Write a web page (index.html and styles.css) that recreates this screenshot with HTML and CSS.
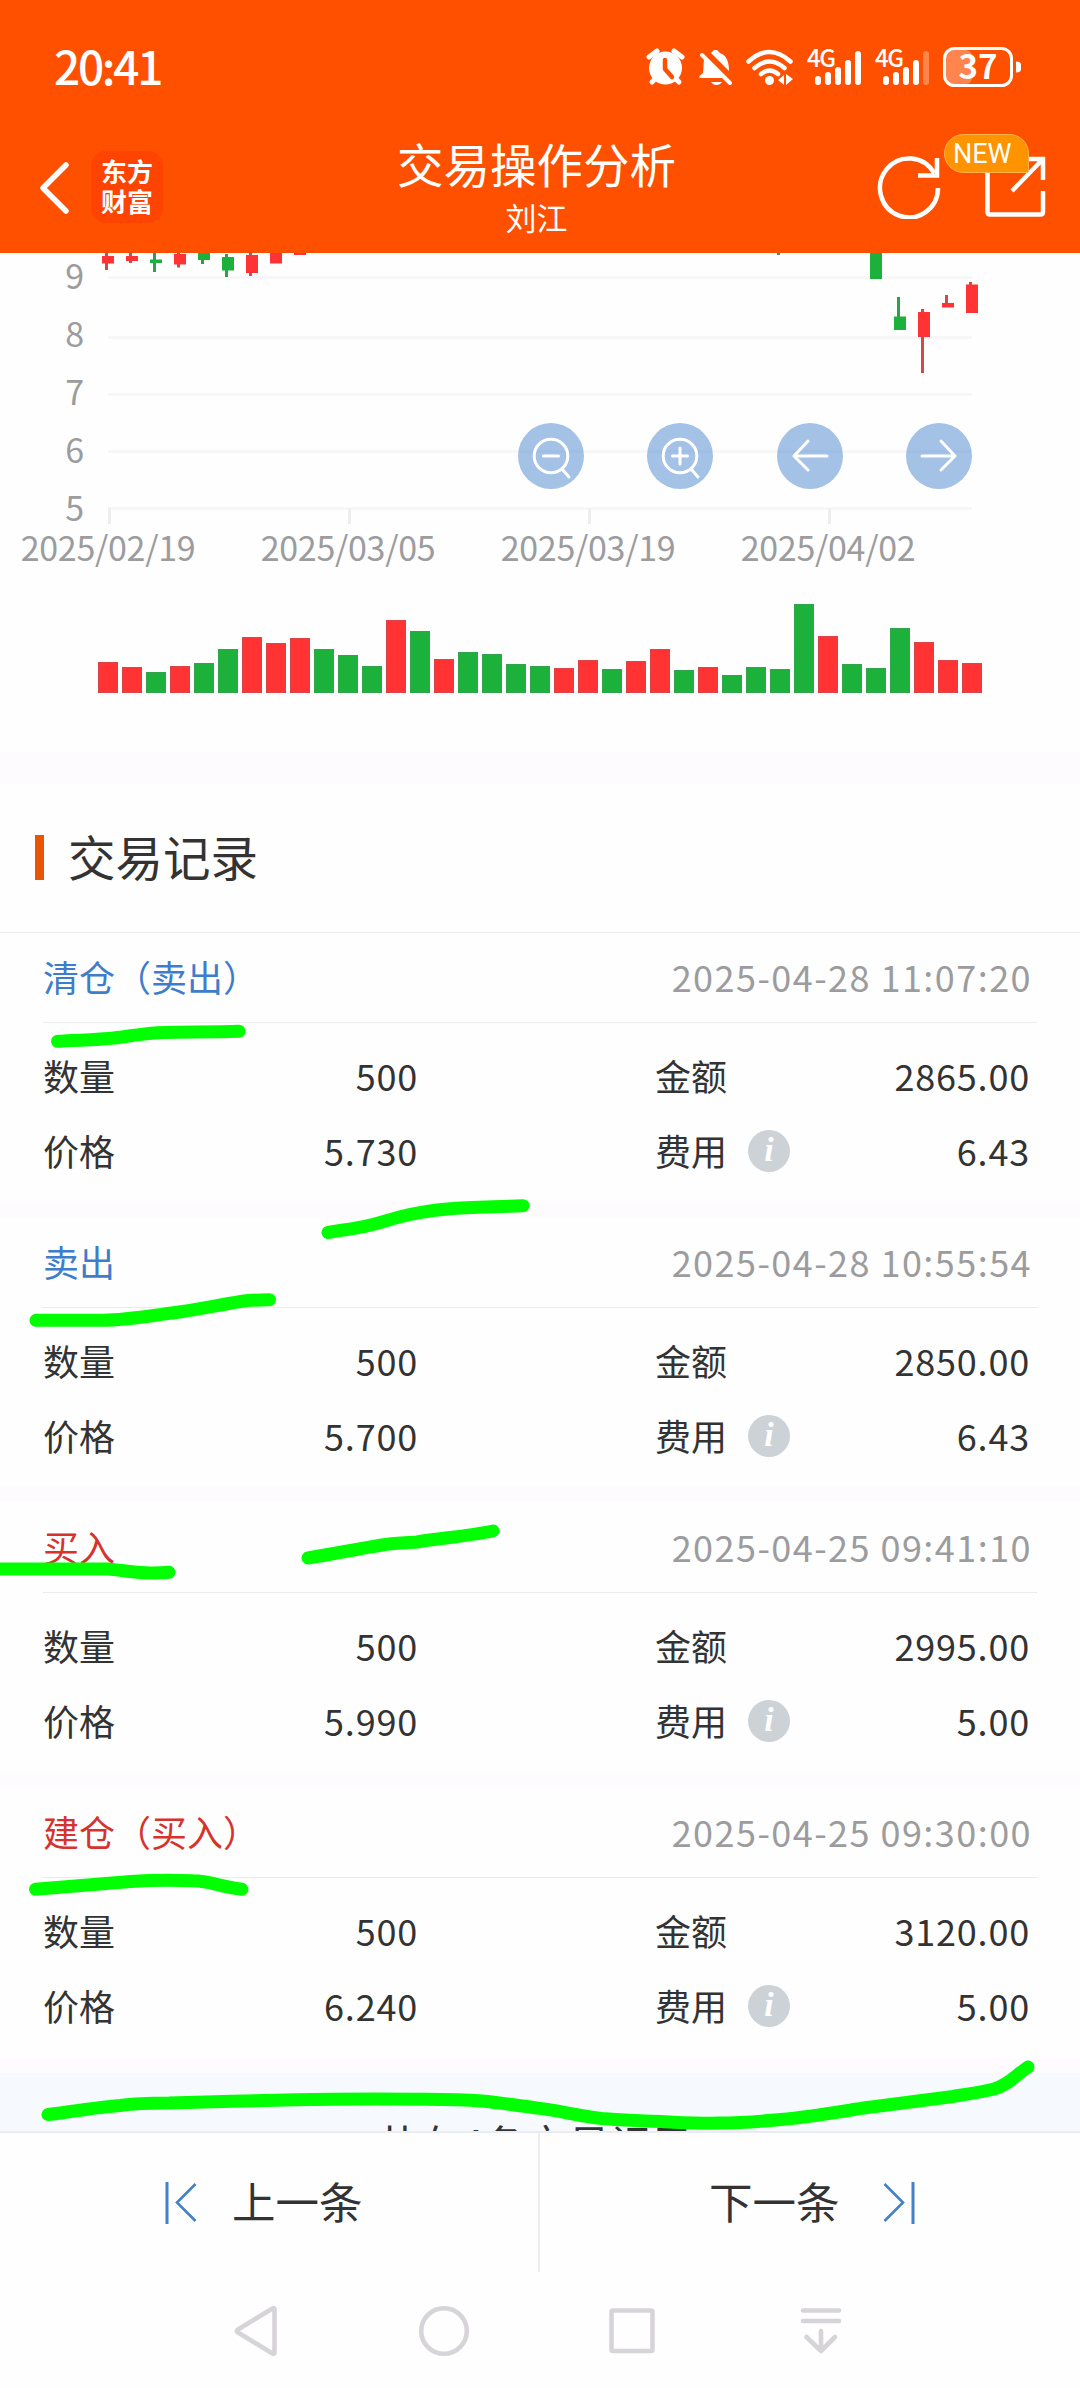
FILE: index.html
```html
<!DOCTYPE html>
<html lang="zh-CN">
<head>
<meta charset="utf-8">
<title>交易操作分析</title>
<link rel="stylesheet" href="styles.css">
</head>
<body>
<div class="screen">
  <header class="top">
    <div class="status">
      <span class="clock">20:41</span>
      <svg class="status-icons" width="384" height="50" viewBox="640 42 384 50">
        <g fill="#fff">
          <circle cx="665.500" cy="68" r="16.500"/>
          <path d="M649 57l8-6M682 57l-8-6M652 82l5-5M679 82l-5-5" stroke="#fff" stroke-width="5" stroke-linecap="round"/>
          <path d="M665 60v9l7 8" fill="none" stroke="#ff5000" stroke-width="4.500" stroke-linecap="round" stroke-linejoin="round"/>
          <path d="M711 53q2-2 3-3h3q1 1 3 3q9 3 9 18zM704 59L723 78H699.500V76L703 73zM711 82h11q-2 3-5.500 3t-5.500-3z"/>
          <path d="M702 55l28 28" stroke="#fff" stroke-width="4" stroke-linecap="round"/>
          <g fill="none" stroke="#fff" stroke-width="4.500" stroke-linecap="round">
            <path d="M748.500 61.500q21-19 42 0M754.500 68q15-13 30 0M761 74q8.500-7 17 0"/>
          </g>
          <circle cx="769.500" cy="80.500" r="4.500"/>
          <path d="M778 80l6-5v10zM786 74l7 5-7 6z"/>
          <text x="807" y="67" class="net">4G</text>
          <text x="875" y="67" class="net">4G</text>
          <g stroke="#fff" stroke-width="6" stroke-linecap="round">
            <path d="M818 79v3M828 75v7M838 70v12M848 63v19M858 54v28"/>
            <path d="M886 79v3M896 75v7M906 70v12M916 63v19"/>
            <path d="M926 54v28" opacity=".3"/>
          </g>
          <rect x="946" y="50" width="26" height="34" rx="6" opacity=".3"/>
          <rect x="944.500" y="48.500" width="67" height="37" rx="10" fill="none" stroke="#fff" stroke-width="3"/>
          <path d="M1016 61.500q5 0 5 3v5q0 3-5 3z"/>
          <text x="978" y="79" text-anchor="middle" class="battery">37</text>
        </g>
      </svg>
    </div>
    <div class="navbar">
      <div class="nav-left">
        <svg width="30" height="54" viewBox="0 0 30 54"><path d="M26 4L3 27L26 50" fill="none" stroke="#fff" stroke-width="5.500" stroke-linecap="round" stroke-linejoin="round"/></svg>
        <div class="logo">东方<br>财富</div>
      </div>
      <div class="titles"><h1>交易操作分析</h1><p>刘江</p></div>
      <div class="nav-right">
        <svg width="64" height="64" viewBox="877 155 64 64" fill="none" stroke="#fff" stroke-width="4.500"><path d="M938 188A29 29.500 0 1 1 934 173M937 158v17.500H918"/></svg>
        <div class="share">
          <svg width="62" height="62" viewBox="985 156 62 62" fill="none" stroke="#fff" stroke-width="4.500"><path d="M987.500 162V212q0 2.500 2.500 2.500h50.500q2.500 0 2.500-2.500V191M1012 191L1042 160M1022 159h21V180"/></svg>
          <span class="badge">NEW</span>
        </div>
      </div>
    </div>
  </header>

  <section class="chart">
    <svg class="kline" width="1080" height="327" viewBox="0 253 1080 327">
      <g fill="#f7f7f8"><path d="M108 276h864v3H108zM108 336h864v3H108zM108 393h864v3H108zM108 450h864v3H108zM108 507h864v3H108z"/></g>
      <path d="M108 508h3v16h-3zM348 508h3v16h-3zM588 508h3v16h-3zM828 508h3v16h-3z" fill="#eee"/>
      <g class="axis">
        <text x="84" y="289" text-anchor="end">9</text>
        <text x="84" y="347" text-anchor="end">8</text>
        <text x="84" y="405" text-anchor="end">7</text>
        <text x="84" y="463" text-anchor="end">6</text>
        <text x="84" y="521" text-anchor="end">5</text>
      </g>
      <g class="axis dates" text-anchor="middle">
        <text x="108" y="561">2025/02/19</text>
        <text x="348" y="561">2025/03/05</text>
        <text x="588" y="561">2025/03/19</text>
        <text x="828" y="561">2025/04/02</text>
      </g>
      <path fill="#d44848" d="M105 253h3v17h-3zM129 253h3v10h-3zM177 253h3v14.500h-3zM249 253h3v23h-3zM921 309h3v64h-3zM945 295h3v9h-3zM969 282h3v4h-3z"/>
      <path fill="#2fa04a" d="M153 253h3v19h-3zM201 253h3v11h-3zM225 254h3v23h-3zM777 253h3v2h-3zM897 297h3v20h-3z"/>
      <path fill="#f33" d="M102 256h12v7.500h-12zM126 256h12v5h-12zM174 254h12v10.500h-12zM246 255h12v18h-12zM270 253h12v10.500h-12zM294 253h12v2h-12zM918 312h12v25h-12zM942 303h12v4.500h-12zM966 284.500h12v28.500h-12z"/>
      <path fill="#1bb13a" d="M150 259.500h12v3.500h-12zM198 253h12v7h-12zM222 257h12v13.500h-12zM870 253h12v26h-12zM894 316.500h12v13.500h-12z"/>
      <g fill="#4a84cd" fill-opacity=".5">
        <circle cx="551" cy="456" r="33"/><circle cx="680" cy="456" r="33"/><circle cx="810" cy="456" r="33"/><circle cx="939" cy="456" r="33"/>
      </g>
      <g fill="none" stroke="#fff" stroke-width="3" stroke-linecap="round" stroke-linejoin="round">
        <circle cx="551" cy="456" r="16.800"/><path d="M543.500 456h15M562 469l7 8"/>
        <circle cx="680" cy="456" r="16.800"/><path d="M672.500 456h15M680 448v16M691 469l7 8"/>
        <path d="M827 456H794M808 441L794 456L808 470"/>
        <path d="M922 456H955M941 441L955 456L941 470"/>
      </g>
    </svg>
    <div class="volume">
      <i class="up" style="height:31px"></i><i class="up" style="height:26px"></i><i class="down" style="height:21px"></i><i class="up" style="height:27px"></i><i class="down" style="height:30px"></i><i class="down" style="height:44px"></i><i class="up" style="height:56px"></i><i class="up" style="height:50px"></i><i class="up" style="height:55px"></i><i class="down" style="height:44px"></i><i class="down" style="height:38px"></i><i class="down" style="height:27px"></i><i class="up" style="height:73px"></i><i class="down" style="height:62px"></i><i class="up" style="height:34px"></i><i class="down" style="height:41px"></i><i class="down" style="height:39px"></i><i class="down" style="height:29px"></i><i class="down" style="height:27px"></i><i class="up" style="height:25px"></i><i class="up" style="height:33px"></i><i class="down" style="height:24px"></i><i class="up" style="height:32px"></i><i class="up" style="height:44px"></i><i class="down" style="height:23px"></i><i class="up" style="height:26px"></i><i class="down" style="height:18px"></i><i class="down" style="height:26px"></i><i class="down" style="height:24px"></i><i class="down" style="height:89px"></i><i class="up" style="height:57px"></i><i class="down" style="height:29px"></i><i class="down" style="height:25px"></i><i class="down" style="height:65px"></i><i class="up" style="height:51px"></i><i class="up" style="height:33px"></i><i class="up" style="height:30px"></i>
    </div>
  </section>

  <section class="records">
    <h2>交易记录</h2>
    <article class="record">
      <div class="head"><span class="sell">清仓（卖出）</span><time>2025-04-28 11:07:20</time></div>
      <dl>
        <div><dt>数量</dt><dd>500</dd></div><div><dt>金额</dt><dd>2865.00</dd></div>
        <div><dt>价格</dt><dd>5.730</dd></div><div><dt>费用<span class="info">i</span></dt><dd>6.43</dd></div>
      </dl>
    </article>
    <article class="record">
      <div class="head"><span class="sell">卖出</span><time>2025-04-28 10:55:54</time></div>
      <dl>
        <div><dt>数量</dt><dd>500</dd></div><div><dt>金额</dt><dd>2850.00</dd></div>
        <div><dt>价格</dt><dd>5.700</dd></div><div><dt>费用<span class="info">i</span></dt><dd>6.43</dd></div>
      </dl>
    </article>
    <article class="record">
      <div class="head"><span class="buy">买入</span><time>2025-04-25 09:41:10</time></div>
      <dl>
        <div><dt>数量</dt><dd>500</dd></div><div><dt>金额</dt><dd>2995.00</dd></div>
        <div><dt>价格</dt><dd>5.990</dd></div><div><dt>费用<span class="info">i</span></dt><dd>5.00</dd></div>
      </dl>
    </article>
    <article class="record">
      <div class="head"><span class="buy">建仓（买入）</span><time>2025-04-25 09:30:00</time></div>
      <dl>
        <div><dt>数量</dt><dd>500</dd></div><div><dt>金额</dt><dd>3120.00</dd></div>
        <div><dt>价格</dt><dd>6.240</dd></div><div><dt>费用<span class="info">i</span></dt><dd>5.00</dd></div>
      </dl>
    </article>
    <div class="summary">共有4条交易记录</div>
  </section>

  <nav class="pager">
    <div class="prev">
      <svg width="32" height="42" viewBox="0 0 32 42" fill="none" stroke="#4481c8"><path d="M2 0v42" stroke-width="3"/><path d="M30.500 2L12 20.500L30.500 39" stroke-width="2.600"/></svg>
      <span>上一条</span>
    </div>
    <div class="next">
      <span>下一条</span>
      <svg width="32" height="42" viewBox="0 0 32 42" fill="none" stroke="#4481c8"><path d="M30 0v42" stroke-width="3"/><path d="M1.500 2L20 20.500L1.500 39" stroke-width="2.600"/></svg>
    </div>
  </nav>

  <div class="system">
    <svg width="1080" height="116" viewBox="0 2272 1080 116" fill="none" stroke="#d6d4d8" stroke-width="4.600" stroke-linejoin="round" stroke-linecap="round">
      <path d="M274.500 2309V2353q0 1.500-2 .500L238 2332.500q-2.500-1.500 0-3L272.500 2308.500q2-1 2 .500z"/>
      <circle cx="444" cy="2331" r="22.800"/>
      <rect x="611.500" y="2310.500" width="41" height="40.500" rx="1.500"/>
      <path d="M803 2310.500h36M803 2321h36M821 2331v20M806.500 2337L821 2351L835 2337"/>
    </svg>
  </div>

  <svg class="marks" width="1080" height="2388" viewBox="0 0 1080 2388" fill="none" stroke="#0f0" stroke-width="13" stroke-linecap="round" stroke-linejoin="round">
    <path d="M57.500 1041.300C76 1040 96 1040 114 1038C131 1036 145 1033 165 1032.500C190 1032 215 1032 239 1031.300"/>
    <path d="M328 1232.500C341 1230 355 1229 368.500 1225.500C379 1223 388 1220 399.500 1217C415 1213 430 1210.500 447.500 1209C473 1207 498 1207 523 1205.700"/>
    <path d="M36 1320.300H103C126 1320 149 1316 172 1313C195 1310 218 1305 241 1301.500C250 1300 260 1299.800 269.500 1299.700"/>
    <path d="M308 1558C333 1554 357 1549 382 1545C393 1543 405 1543 417 1542C442 1538 468 1536 493 1531"/>
    <path d="M0 1569H107C121 1570 136 1573 151 1573C157 1573 163 1573 169 1572.300"/>
    <path d="M35.500 1889.300C67 1887 99 1884 131 1881.500C152 1880 173 1880 193 1880.800C211 1881 220 1887 242 1889.300"/>
    <path d="M48 2114.500C72 2112 97 2107 120.500 2105.500C137 2103 153 2103 169 2103C211 2102 254 2100.500 296 2099.800C335 2099 374 2099 413 2099.200C436 2099 459 2099 482 2101C502 2103 521 2106 540 2108.400C561 2111 579 2116 602 2118.500C620 2120 640 2121 660.500 2121.500C680 2123 699 2123.500 719 2123C740 2123 760 2121.500 781 2119.500C810 2117 838 2112 867 2107.500C896 2104 925 2100 953 2096.500C968 2094 982 2092 994 2089C1008 2085 1015 2076 1028 2067"/>
  </svg>
</div>
</body>
</html>
```

FILE: styles.css
```css
* { box-sizing: border-box; margin: 0; padding: 0; }
body { background: #fefefe; color: #333; font-family: "Noto Sans CJK SC", sans-serif; font-size: 36px; }
svg { display: block; flex: none; }

.screen { position: relative; width: 1080px; height: 2388px; overflow: hidden; display: flex; flex-direction: column; }

.top { height: 253px; flex: none; background: #ff5000; color: #fff; }
.status { height: 134px; padding: 0 56px 0 54px; display: flex; justify-content: space-between; align-items: center; }
.status-icons { overflow: visible; }
.clock { font-size: 46px; font-weight: 500; letter-spacing: -2.300px; line-height: 60px; margin-top: -4px; }
.net { font: 500 24px "Noto Sans CJK SC", sans-serif; letter-spacing: -1.500px; }
.battery { font: 700 33px "Noto Sans CJK SC", sans-serif; }

.navbar { height: 119px; display: grid; grid-template-columns: 1fr auto 1fr; }
.nav-left { display: flex; padding-left: 40px; align-items: flex-start; }
.nav-left svg { margin-top: 27px; }
.logo { width: 72px; height: 72px; margin: 17px 0 0 21px; padding-top: 5px; border-radius: 15px; background: #ff4300; font-size: 26px; font-weight: 700; line-height: 30px; text-align: center; }
.titles { padding-right: 7px; text-align: center; }
h1 { font-size: 46.500px; font-weight: 400; line-height: 60px; margin-top: -1px; }
.titles p { font-size: 31px; line-height: 40px; margin-top: 4px; }
.nav-right { display: flex; justify-content: flex-end; gap: 44px; padding: 21px 33px 0 0; }
.share { position: relative; padding-top: 1px; }
.badge { position: absolute; right: 18px; top: -21px; width: 85px; height: 39px; padding-left: 8px; border: 1px solid #ffb24d; border-radius: 20px 20px 2px 20px; background: #ff9400; font: 400 27px/39px Roboto, sans-serif; }

.chart { height: 531px; flex: none; border-bottom: 32px solid #fefbff; }
.axis { font-size: 34px; fill: #9c9c9f; }
.dates { letter-spacing: -.300px; }
.volume { height: 113px; padding-left: 98px; display: flex; align-items: flex-end; gap: 4px; }
.volume i { width: 20px; border-style: solid; border-width: 1px 1px 2px; }
.volume .up { background: #f33; border-color: #dd4448; }
.volume .down { background: #1bb13a; border-color: #33a350; }

.records { height: 1347px; flex: none; overflow: hidden; }
h2 { height: 149px; padding: 0 0 4px 35px; display: flex; align-items: center; gap: 24px; border-bottom: 1px solid #ebebed; font-size: 47.500px; font-weight: 400; line-height: 60px; }
h2::before { content: ""; width: 9px; height: 45px; margin-top: 3px; background: #ea5504; }
.record { height: 285px; border-bottom: 16px solid #fefbff; }
.head { height: 90px; margin: 0 43px; padding: 0 5px 3px 0; display: flex; justify-content: space-between; align-items: center; border-bottom: 1px solid #ebebed; line-height: 50px; }
.sell { color: #3d7dcc; }
.buy { color: #d6322e; }
time { color: #9c9c9f; letter-spacing: 1.450px; }
dl { padding: 14px 50px 0 43px; display: grid; grid-template-columns: 375px 375px; justify-content: space-between; grid-auto-rows: 75px; }
dl div { display: flex; justify-content: space-between; align-items: center; }
dt { display: flex; align-items: center; }
dd { letter-spacing: .800px; }
.info { width: 42px; height: 42px; margin: 2px 0 0 21px; border-radius: 50%; background: #cdd2d6; color: #fff; font: italic 700 34px/40px "Liberation Serif", serif; text-align: center; }
.summary { height: 140px; padding: 45px 10px 0 0; background: #f6faff; font-size: 42px; line-height: 50px; text-align: center; }

.pager { height: 141px; flex: none; display: grid; grid-template-columns: 1fr 1fr; border-top: 2px solid #ececee; background: #fefefe; font-size: 43.500px; }
.pager div { display: flex; align-items: center; line-height: 60px; }
.pager span { margin-top: -4px; }
.prev { padding-left: 165px; gap: 35px; border-right: 2px solid #ececee; }
.next { padding-left: 169px; gap: 43px; }
.system { flex: none; height: 116px; }

.marks { position: absolute; left: 0; top: 0; }
```
